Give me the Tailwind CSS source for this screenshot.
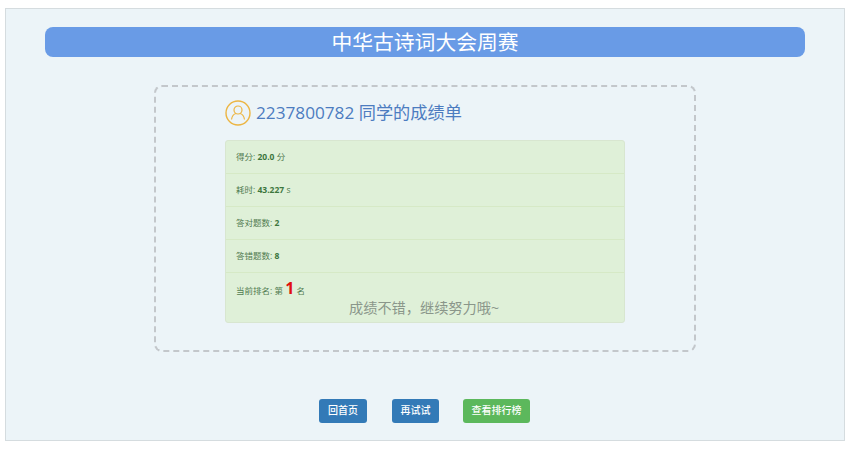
<!DOCTYPE html>
<html lang="zh-CN">
<head>
  <meta charset="UTF-8" />
  <title>中华古诗词大会周赛</title>
  <script src="https://cdn.jsdelivr.net/npm/@tailwindcss/browser@4"></script>
</head>
<body class="bg-white font-['Open_Sans','Noto_Sans_CJK_SC',sans-serif]">
  <div class="ml-[5px] mt-[8px] w-[840px] h-[433px] border border-[#d5dcdf] bg-[#ecf4f8] flex flex-col">
    <!-- header -->
    <div class="mx-[39px] mt-[18px] h-[30px] rounded-[8px] bg-[#699be6] text-white text-[20.8px] leading-[30px] text-center">中华古诗词大会周赛</div>

    <!-- result card -->
    <div class="ml-[148px] mt-[28px] w-[542px] h-[267px] border-2 border-dashed border-[#c3c7cb] rounded-[8px] pl-[69px] pt-[12px]">
      <div class="flex items-center gap-[5px] h-[28px]">
        <svg class="w-[26px] h-[26px]" viewBox="0 0 26 26" fill="none" stroke="#ecb543" stroke-width="1.4">
          <circle cx="13" cy="13" r="12" />
          <circle cx="13" cy="10" r="4" stroke-width="1.2" />
          <path d="M6.5 19.5c.6-3.8 2.6-5.6 4.6-6M19.5 19.5c-.6-3.8-2.6-5.6-4.6-6" stroke-width="1.2" />
        </svg>
        <span class="text-[17.2px] leading-[28px] text-[#4c7cc0]">2237800782 同学的成绩单</span>
      </div>
      <div class="mt-[13px] w-[400px] h-[183px] rounded-[3px] border border-[#d8e6d0] bg-[#dff0d8] text-[8.5px] text-[#4f7a4f]">
        <div class="h-[33px] px-[10px] flex items-center border-b border-[#d6e9c6]"><span>得分: <b class="text-[#3c763d]">20.0</b> 分</span></div>
        <div class="h-[33px] px-[10px] flex items-center border-b border-[#d6e9c6]"><span>耗时: <b class="text-[#3c763d]">43.227</b> s</span></div>
        <div class="h-[33px] px-[10px] flex items-center border-b border-[#d6e9c6]"><span>答对题数: <b class="text-[#3c763d]">2</b></span></div>
        <div class="h-[33px] px-[10px] flex items-center border-b border-[#d6e9c6]"><span>答错题数: <b class="text-[#3c763d]">8</b></span></div>
        <div class="px-[10px] h-[31px] flex items-center"><span>当前排名: 第 <b class="text-[16px] leading-[16px] text-[#e01010]">1</b> 名</span></div>
        <div class="text-center text-[14.2px] leading-[14px] text-[#8a968a] -mt-[3px] pr-[2px]">成绩不错，继续努力哦~</div>
      </div>
    </div>

    <!-- actions -->
    <div class="mt-[47px] ml-[313px] flex gap-[25px] text-[10px] font-medium text-white">
      <a class="w-[48px] h-[24px] leading-[23px] text-center rounded-[3px] bg-[#337ab7]">回首页</a>
      <a class="w-[47px] h-[24px] leading-[23px] text-center rounded-[3px] bg-[#337ab7]">再试试</a>
      <a class="-ml-[1px] w-[67px] h-[24px] leading-[23px] text-center rounded-[3px] bg-[#5cb85c]">查看排行榜</a>
    </div>
  </div>
</body>
</html>
